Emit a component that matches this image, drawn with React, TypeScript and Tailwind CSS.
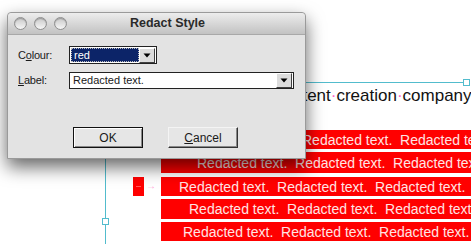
const rows = [
  { pl: "pl-[141px]", h: "h-[19px]", mt: "mt-0" },
  { pl: "pl-[36px]", h: "h-[21px]", mt: "mt-[3px]" },
  { pl: "pl-[18px]", h: "h-[19px]", mt: "mt-[4px]" },
  { pl: "pl-[28px]", h: "h-[20px]", mt: "mt-[3px]" },
  { pl: "pl-[22px]", h: "h-[19px]", mt: "mt-[3px]" },
];

function DropButton() {
  return (
    <div className="flex h-[15px] w-[16px] items-center justify-center border border-t-white border-l-white border-r-[#404040] border-b-[#404040] bg-[#dcdcdc]">
      <svg width="8" height="5" viewBox="0 0 8 5">
        <path d="M0.5 0.5 H7.5 L4 4.5 Z" fill="#000" />
      </svg>
    </div>
  );
}

function TrafficLight() {
  return (
    <span className="h-[13px] w-[13px] rounded-full border border-[#8f8f8f] bg-gradient-to-b from-[#c9c9c9] to-[#f6f6f6] shadow-[inset_0_1px_1px_rgba(0,0,0,0.25)]" />
  );
}

export default function App() {
  return (
    <div className="relative h-[244px] w-[471px] overflow-hidden bg-white font-['Liberation_Sans',Arial,sans-serif]">
      {/* canvas: selection guides */}
      <div className="absolute left-[105px] top-[120px] h-[124px] w-px bg-[#52bccd]" />
      <div className="absolute left-[102px] top-[218px] h-[7px] w-[7px] border border-[#52bccd] bg-white" />
      <div className="absolute left-[200px] top-[82px] h-px w-[264px] bg-[#52bccd]" />
      <div className="absolute left-[463px] top-[79px] h-[7px] w-[7px] border border-[#52bccd] bg-white" />

      {/* canvas: heading text */}
      <div className="absolute left-[275px] top-[86px] whitespace-pre text-[17px] leading-[20px] text-[#111]">
        content<span className="text-[#ff66cc]">·</span>creation<span className="text-[#ff66cc]">·</span>company
      </div>

      {/* canvas: anchor marker */}
      <div className="absolute left-[133px] top-[177px] flex h-[19px] w-[11px] items-center justify-center bg-[#ff0000]">
        <span className="h-px w-[5px] bg-[#ff5a5a]" />
      </div>
      <div className="absolute left-[146px] top-[178px] text-[10px] leading-[16px] text-[#ffa8d8]">→</div>

      {/* canvas: redacted block */}
      <div className="absolute left-[161px] top-[130px] flex w-[320px] flex-col">
        {rows.map((r, i) => (
          <div
            key={i}
            className={`${r.h} ${r.mt} ${r.pl} flex items-center whitespace-pre bg-[#ff0000] text-[14px] leading-none text-[#ffe4e4]`}
          >
            {"Redacted text.  Redacted text.  Redacted text."}
          </div>
        ))}
      </div>

      {/* dialog window */}
      <div className="absolute left-[7px] top-[12px] flex h-[147px] w-[299px] flex-col rounded-t-[4px] border border-[#9a9a9a] bg-[#e3e3e3] shadow-[0_8px_18px_rgba(0,0,0,0.6)]">
        <div className="flex h-[22px] items-center rounded-t-[4px] border-b border-[#a8a8a8] bg-gradient-to-b from-[#ededed] to-[#c2c2c2] pl-[6px]">
          <div className="flex gap-[7px]">
            <TrafficLight />
            <TrafficLight />
            <TrafficLight />
          </div>
          <span className="ml-[63px] text-[12.5px] font-bold text-[#2a2a2a]">Redact Style</span>
        </div>

        <div className="flex flex-col pl-[10px] pt-[11px] text-[11px] text-[#1a1a1a]">
          <div className="flex h-[18px] items-center">
            <span className="w-[51px] tracking-[-0.2px]">
              C<span className="underline">o</span>lour:
            </span>
            <div className="flex h-[18px] w-[88px] items-center border border-[#222] bg-white p-px">
              <div className="flex h-full flex-1 items-center border border-dotted border-[#bbbbbb] bg-[#0c2468] pl-[2px] text-white">
                red
              </div>
              <DropButton />
            </div>
          </div>

          <div className="mt-[8px] flex h-[17px] items-center">
            <span className="w-[51px] tracking-[-0.2px]">
              <span className="underline">L</span>abel:
            </span>
            <div className="flex h-[17px] w-[225px] items-center border border-[#222] bg-white pl-[3px] pr-px">
              <span className="flex-1">Redacted text.</span>
              <DropButton />
            </div>
          </div>

          <div className="mt-[38px] flex gap-[25px] pl-[55px]">
            <button className="flex h-[21px] w-[70px] items-center justify-center border border-[#111] bg-[#e6e6e6] shadow-[inset_1px_1px_0_#fff,inset_-1px_-1px_0_#888] text-[12px] text-[#1a1a1a]">
              OK
            </button>
            <button className="flex h-[21px] w-[70px] items-center justify-center border border-t-[#f4f4f4] border-l-[#f4f4f4] border-r-[#333] border-b-[#333] bg-[#e6e6e6] shadow-[inset_-1px_-1px_0_#888] text-[12px] text-[#1a1a1a]">
              <span className="underline">C</span>ancel
            </button>
          </div>
        </div>
      </div>
    </div>
  );
}
